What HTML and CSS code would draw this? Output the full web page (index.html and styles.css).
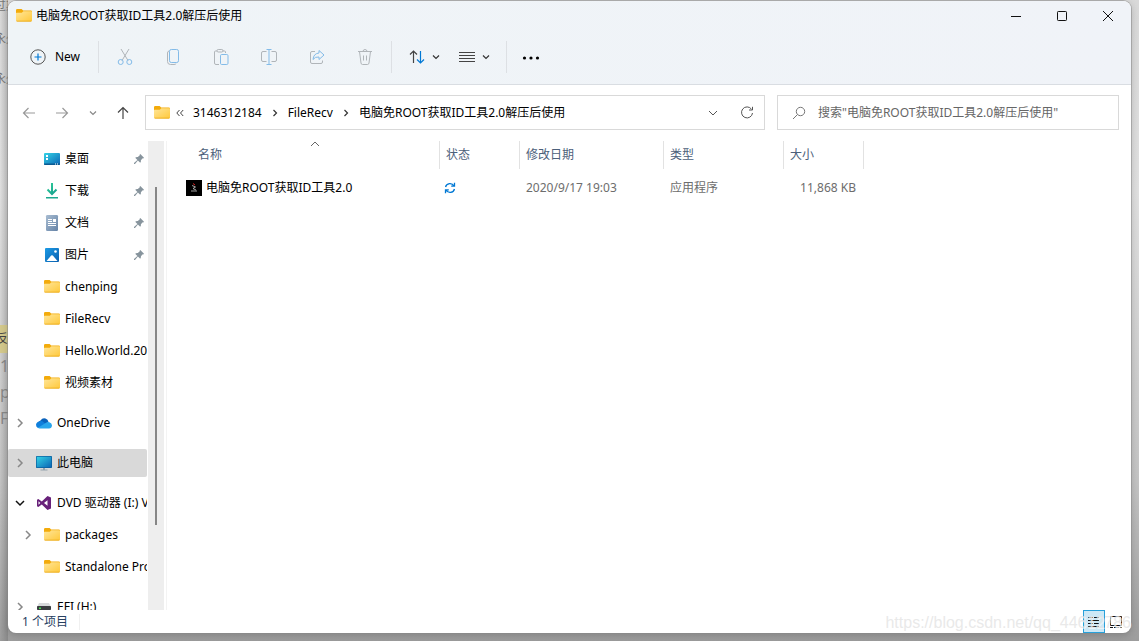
FILE: index.html
```html
<!DOCTYPE html>
<html lang="zh-CN">
<head>
<meta charset="utf-8">
<meta name="viewport" content="width=device-width, initial-scale=1">
<title>电脑免ROOT获取ID工具2.0解压后使用</title>
<link rel="stylesheet" href="styles.css">
</head>
<body>
<svg class="defs" aria-hidden="true">
  <defs>
    <linearGradient id="gFolder" x1="0" y1="0" x2="1" y2="1"><stop offset="0" stop-color="#ffe69a"/><stop offset="1" stop-color="#ffc83a"/></linearGradient>
    <linearGradient id="gScreen" x1="0" y1="0" x2="1" y2="1"><stop offset="0" stop-color="#34d3e6"/><stop offset="1" stop-color="#0b65b5"/></linearGradient>
    <linearGradient id="gDoc" x1="0" y1="0" x2="1" y2="1"><stop offset="0" stop-color="#a9bdd2"/><stop offset="1" stop-color="#6482a6"/></linearGradient>
    <linearGradient id="gPic" x1="0" y1="0" x2="1" y2="1"><stop offset="0" stop-color="#1c9be6"/><stop offset="1" stop-color="#0a5fae"/></linearGradient>
    <linearGradient id="gDown" gradientUnits="userSpaceOnUse" x1="3" y1="1" x2="13" y2="12"><stop offset="0" stop-color="#2fcf9a"/><stop offset="1" stop-color="#12988c"/></linearGradient>
  </defs>
  <symbol id="folder" viewBox="0 1 16 16"><path d="M0 3.2Q0 2 1.2 2H5.6L7.2 3.6H14.8Q16 3.6 16 4.800V8H0Z" fill="#f3ab0b"/><path d="M0 6.200Q0 5.800 .6 5.800H5.800L7.400 4.300H15.200Q16 4.300 16 5V13.200Q16 14.500 14.800 14.500H1.200Q0 14.500 0 13.200Z" fill="url(#gFolder)"/><path d="M.2 13.700Q.5 14.500 1.200 14.500H14.800Q15.500 14.500 15.800 13.700Z" fill="#e8a30e"/></symbol>
  <symbol id="desktop" viewBox="0 0 16 16"><rect y="2" width="16" height="12" rx="1" fill="url(#gScreen)"/><path d="M0 12.500H16V13Q16 14 15 14H1Q0 14 0 13Z" fill="#0a5a92"/><path d="M2 4h2v2H2zM2 7h2v2H2zM11 12.500h1v1h-1zM13 12.500h1v1h-1z" fill="#fff"/></symbol>
  <symbol id="download" viewBox="0 0 16 16" fill="none" stroke="url(#gDown)" stroke-width="2"><path d="M8 0V11M3.500 6.500 8 11 12.500 6.500"/><path d="M2 14H14V15.500H2Z" fill="#1ba98f" stroke="none"/></symbol>
  <symbol id="document" viewBox="0 0 16 16"><rect x="2" width="12" height="16" rx="1.200" fill="url(#gDoc)"/><path d="M4 4.500h4M4 6.500h4M4 8.500h8M4 10.500h8" stroke="#fff"/><path d="M9 4h3v3H9z" fill="#fff"/></symbol>
  <symbol id="picture" viewBox="0 0 16 16"><rect x="1" y="1" width="14" height="14" rx="1" fill="url(#gPic)"/><path d="M2.500 14 7.200 8.500Q8 7.800 8.800 8.500L13.500 14Z" fill="#fff"/><circle cx="11.500" cy="4.500" r="1.300" fill="#fff"/></symbol>
  <symbol id="cloud" viewBox="0 0 16 16"><path d="M4.500 5.500Q6.500 2.500 9.500 3.500Q12 4.400 12.500 7L8 10 2 8Q2.800 6 4.500 5.500Z" fill="#0a62bb"/><path d="M3.600 6.200Q6 5.500 8 7.400L13 11.500 2 13Q0 12 0 9.800Q.4 6.800 3.600 6.200Z" fill="#0f7fdc"/><path d="M2 12.800 10 7.800Q11.500 6.600 13.300 7.200Q16 8 16 10.500Q15.700 13.500 13 13.500H3.500Q2.500 13.500 2 12.800Z" fill="#28a5ec"/></symbol>
  <symbol id="monitor" viewBox="0 0 16 16"><path d="M7 13h2v1.500h2.500v1h-7v-1H7z" fill="#96a3ad"/><rect y="1" width="16" height="12" rx=".8" fill="#0a5c9c"/><rect x=".7" y="1.700" width="14.600" height="10.600" fill="url(#gScreen)"/></symbol>
  <symbol id="vs" viewBox="0 0 16 16"><path d="M11.500 1 15 2.500V13.500L11.500 15 5.800 9.600 2.300 12 1 11.300V4.700L2.300 4 5.800 6.400ZM11.500 5.200 8 8 11.500 10.800ZM2.500 6.200V9.800L4.300 8Z" fill="#68217a" fill-rule="evenodd"/></symbol>
  <symbol id="drive" viewBox="0 0 16 16"><path d="M3 4H13L15 8H1Z" fill="#d7d9db"/><rect x="1" y="7" width="14" height="4" rx=".8" fill="#3a3d40"/><path d="M3 8.500h2V10H3z" fill="#43e04c"/></symbol>
  <symbol id="pin" viewBox="0 0 12 12"><path d="M7.300 1 11 4.700 10.300 5.400 9.700 5.200 7.900 7.200Q8.200 8.700 7.200 9.800L4.900 7.600 2 11 1 11 1 10.100 4.400 7.100 2.200 4.800Q3.300 3.800 4.800 4.100L6.800 2.300 6.600 1.700Z" fill="#87949d"/></symbol>
  <symbol id="right" viewBox="0 0 12 12"><path d="M4 2 8 6 4 10" fill="none" stroke="currentColor" stroke-width="1.500"/></symbol>
  <symbol id="down" viewBox="0 0 12 12"><path d="M2 4 6 8 10 4" fill="none" stroke="currentColor" stroke-width="1.500"/></symbol>
  <symbol id="smalldown" viewBox="0 0 8 8"><path d="M1 2.500 4 5.500 7 2.500" fill="none" stroke="currentColor" stroke-width="1.200"/></symbol>
  <symbol id="smallright" viewBox="0 0 8 8"><path d="M2.500 1 5.500 4 2.500 7" fill="none" stroke="currentColor" stroke-width="1.200"/></symbol>
</svg>

<div class="backdrop" aria-hidden="true">
  <span class="scrap scrap-a">过期</span>
  <span class="scrap scrap-b">永久</span>
  <span class="scrap scrap-c">永久</span>
  <span class="scrap scrap-d">反</span>
  <span class="scrap scrap-e">1</span>
  <span class="scrap scrap-f">p</span>
  <span class="scrap scrap-g">F</span>
</div>

<main class="window">
  <header class="titlebar">
    <svg class="icon"><use href="#folder"/></svg>
    <h1 class="title">电脑免ROOT获取ID工具2.0解压后使用</h1>
    <div class="captions">
      <button class="caption" aria-label="最小化"><svg viewBox="0 0 12 12"><path d="M1 6.500h10"/></svg></button>
      <button class="caption" aria-label="最大化"><svg viewBox="0 0 12 12"><rect x="1.500" y="1.500" width="9" height="9" rx=".8"/></svg></button>
      <button class="caption" aria-label="关闭"><svg viewBox="0 0 12 12"><path d="M1 1 11 11M11 1 1 11"/></svg></button>
    </div>
  </header>

  <div class="commands" role="toolbar" aria-label="命令">
    <button class="new"><svg class="icon" viewBox="0 0 16 16" fill="none"><circle cx="8" cy="8" r="7.200" stroke="#555"/><path d="M8 4.500v7M4.500 8h7" stroke="#0078d4" stroke-width="1.200"/></svg><span>New</span></button>
    <span class="rule"></span>
    <div class="tools">
      <button class="tool" aria-label="剪切"><svg viewBox="0 0 16 18" fill="none"><path d="M4 1 11 12.500M12 1 5 12.500" stroke="#b0b5b9"/><circle cx="3.700" cy="14" r="2.500" stroke="#83bbe8"/><circle cx="12.300" cy="14" r="2.500" stroke="#83bbe8"/></svg></button>
      <button class="tool" aria-label="复制"><svg viewBox="0 0 16 18" fill="none"><path d="M4 3Q2.500 3.300 2.500 5V13.500Q2.500 16.500 5.500 16.500H9Q10.700 16.500 11.200 15.500" stroke="#b0b5b9"/><rect x="4.500" y="1.500" width="9" height="13" rx="1.800" stroke="#83bbe8"/></svg></button>
      <button class="tool" aria-label="粘贴"><svg viewBox="0 0 16 18" fill="none"><path d="M4 3H2.500Q1.500 3 1.500 4V15Q1.500 16.500 3 16.500H6M9.500 3H11.500Q12.500 3 12.500 4V5" stroke="#b0b5b9"/><rect x="4" y="1.500" width="6" height="2.500" rx="1.200" stroke="#b0b5b9"/><rect x="7.500" y="6.500" width="7.500" height="10" rx="1.200" stroke="#83bbe8"/></svg></button>
      <button class="tool" aria-label="重命名"><svg viewBox="0 0 18 18" fill="none"><path d="M6.500 3.500H3Q1.500 3.500 1.500 5V12Q1.500 13.500 3 13.500H6.500M11.500 3.500H15Q16.500 3.500 16.500 5V12Q16.500 13.500 15 13.500H11.500" stroke="#b0b5b9"/><path d="M9 1.500V16.500M6.500 1.500h5M6.500 16.500h5" stroke="#83bbe8"/></svg></button>
      <button class="tool" aria-label="共享"><svg viewBox="0 0 16 18" fill="none"><path d="M6 3.500H3Q1.500 3.500 1.500 5V14Q1.500 15.500 3 15.500H12Q13.500 15.500 13.500 14V12.500" stroke="#b0b5b9"/><path d="M10 2.500 15 7 10 11.500V9Q6 8.500 4 11.500Q4.500 5.500 10 5Z" stroke="#83bbe8" stroke-linejoin="round"/></svg></button>
      <button class="tool" aria-label="删除"><svg viewBox="0 0 16 18" fill="none" stroke="#b0b5b9"><path d="M1 3.500h14M6 3.500Q6 1.500 8 1.500T10 3.500M2.500 3.500 4 15Q4.200 16.500 5.500 16.500H10.500Q11.800 16.500 12 15L13.500 3.500M6.500 7.500v5M9.500 7.500v5"/></svg></button>
    </div>
    <span class="rule"></span>
    <div class="menus">
      <button class="menu" aria-label="排序"><svg class="glyph" viewBox="0 0 18 18" fill="none"><path d="M5.500 15V3M2 6.500 5.500 3 9 6.500" stroke="#444" stroke-width="1.200"/><path d="M12.500 3V15M9 11.500 12.500 15 16 11.500" stroke="#0078d4" stroke-width="1.200"/></svg><svg class="tiny"><use href="#smalldown"/></svg></button>
      <button class="menu" aria-label="查看"><svg class="glyph" viewBox="0 0 18 18"><path d="M1 4.500h16M1 7.500h16M1 10.500h16M1 13.500h16" stroke="#444"/></svg><svg class="tiny"><use href="#smalldown"/></svg></button>
    </div>
    <span class="rule"></span>
    <button class="more" aria-label="更多"><svg class="glyph" viewBox="0 0 18 18"><circle cx="2.500" cy="10" r="1.600"/><circle cx="9" cy="10" r="1.600"/><circle cx="15.500" cy="10" r="1.600"/></svg></button>
  </div>

  <div class="location">
    <nav class="history" aria-label="导航">
      <button class="hist faint" aria-label="后退"><svg viewBox="0 0 14 14"><path d="M13 7H1.500M6.500 2 1.500 7 6.500 12"/></svg></button>
      <button class="hist faint" aria-label="前进"><svg viewBox="0 0 14 14"><path d="M1 7H12.500M7.500 2 12.500 7 7.500 12"/></svg></button>
      <button class="hist recent" aria-label="最近"><svg><use href="#smalldown"/></svg></button>
      <button class="hist" aria-label="向上"><svg viewBox="0 0 14 14"><path d="M7 13V1.500M2 6.500 7 1.500 12 6.500"/></svg></button>
    </nav>
    <div class="address">
      <svg class="icon"><use href="#folder"/></svg>
      <svg class="chev-left" viewBox="0 0 8 8"><path d="M3.500 1 .8 4 3.500 7M7.200 1 4.500 4 7.200 7"/></svg>
      <a class="crumb" href="#a">3146312184</a>
      <svg class="tiny"><use href="#smallright"/></svg>
      <a class="crumb" href="#b">FileRecv</a>
      <svg class="tiny"><use href="#smallright"/></svg>
      <a class="crumb" href="#c">电脑免ROOT获取ID工具2.0解压后使用</a>
      <div class="address-end">
        <button class="plain" aria-label="历史记录"><svg class="drop" viewBox="0 0 10 10"><path d="M1 3 5 7 9 3"/></svg></button>
        <button class="plain" aria-label="刷新"><svg class="refresh" viewBox="0 0 14 14"><path d="M11.500 3.200A5.500 5.500 0 1 0 12.500 7M12.500 .8V4H9"/></svg></button>
      </div>
    </div>
    <label class="search">
      <svg viewBox="0 0 14 14"><circle cx="8.500" cy="5.500" r="4.200"/><path d="M5.500 8.500 1 13"/></svg>
      <input type="text" aria-label="搜索" placeholder="搜索&quot;电脑免ROOT获取ID工具2.0解压后使用&quot;">
    </label>
  </div>

  <div class="content">
    <nav class="tree" aria-label="文件夹">
      <div class="group">
        <a class="node child" href="#1"><span class="twist"></span><svg class="icon"><use href="#desktop"/></svg><span class="label">桌面</span><svg class="pin"><use href="#pin"/></svg></a>
        <a class="node child" href="#2"><span class="twist"></span><svg class="icon"><use href="#download"/></svg><span class="label">下载</span><svg class="pin"><use href="#pin"/></svg></a>
        <a class="node child" href="#3"><span class="twist"></span><svg class="icon"><use href="#document"/></svg><span class="label">文档</span><svg class="pin"><use href="#pin"/></svg></a>
        <a class="node child" href="#4"><span class="twist"></span><svg class="icon"><use href="#picture"/></svg><span class="label">图片</span><svg class="pin"><use href="#pin"/></svg></a>
        <a class="node child" href="#5"><span class="twist"></span><svg class="icon"><use href="#folder"/></svg><span class="label">chenping</span></a>
        <a class="node child" href="#6"><span class="twist"></span><svg class="icon"><use href="#folder"/></svg><span class="label">FileRecv</span></a>
        <a class="node child" href="#7"><span class="twist"></span><svg class="icon"><use href="#folder"/></svg><span class="label">Hello.World.2020</span></a>
        <a class="node child" href="#8"><span class="twist"></span><svg class="icon"><use href="#folder"/></svg><span class="label">视频素材</span></a>
      </div>
      <div class="group">
        <a class="node" href="#9"><svg class="twist"><use href="#right"/></svg><svg class="icon"><use href="#cloud"/></svg><span class="label">OneDrive</span></a>
      </div>
      <div class="group">
        <a class="node selected" href="#10"><svg class="twist"><use href="#right"/></svg><svg class="icon"><use href="#monitor"/></svg><span class="label">此电脑</span></a>
      </div>
      <div class="group">
        <a class="node open" href="#11"><svg class="twist"><use href="#down"/></svg><svg class="icon"><use href="#vs"/></svg><span class="label">DVD 驱动器 (I:) VS</span></a>
        <a class="node child" href="#12"><svg class="twist"><use href="#right"/></svg><svg class="icon"><use href="#folder"/></svg><span class="label">packages</span></a>
        <a class="node child" href="#13"><span class="twist"></span><svg class="icon"><use href="#folder"/></svg><span class="label">Standalone Profiler</span></a>
      </div>
      <div class="group">
        <a class="node" href="#14"><svg class="twist"><use href="#right"/></svg><svg class="icon"><use href="#drive"/></svg><span class="label">EFI (H:)</span></a>
      </div>
    </nav>
    <div class="scrollbar"><div class="thumb"></div></div>
    <section class="files">
      <table class="list">
        <thead>
          <tr>
            <th class="c-name">名称<svg class="sort" viewBox="0 0 10 6"><path d="M1 5 5 1 9 5"/></svg></th>
            <th class="c-state">状态</th>
            <th class="c-date">修改日期</th>
            <th class="c-type">类型</th>
            <th class="c-size">大小</th>
          </tr>
        </thead>
        <tbody>
          <tr>
            <td><span class="file"><svg class="icon" viewBox="0 0 16 16"><path d="M0 0h16v16H0z"/><path d="M6 5.500 9.500 7 7 8.500 10 10M5 11h6" fill="none" stroke="#ccc" stroke-width=".8"/><path d="M7 3.500 9 5" stroke="#d22"/></svg>电脑免ROOT获取ID工具2.0</span></td>
            <td class="state"><svg class="sync" viewBox="0 0 12 12"><path d="M1.500 5A4.600 4.600 0 0 1 10 4M10.500 .8V4.200H7.200M10.500 7A4.600 4.600 0 0 1 2 8M1.500 11.200V7.800H4.800"/></svg></td>
            <td>2020/9/17 19:03</td>
            <td>应用程序</td>
            <td class="size">11,868 KB</td>
          </tr>
        </tbody>
      </table>
    </section>
  </div>

  <footer class="status">
    <span class="count">1 个项目</span>
    <div class="views">
      <button class="view active" aria-label="详细信息"><svg viewBox="0 0 12 12"><path d="M0 1.500h5M6 1.500h5M0 4.500h11M0 7.500h5M6 7.500h5M0 10.500h11"/></svg></button>
      <button class="view" aria-label="大图标"><svg viewBox="0 0 12 12"><path d="M.5 .5h11v9h-11zM0 11.500h3M4 11.500h5M10 11.500h2"/></svg></button>
    </div>
  </footer>
</main>
<div class="watermark">https://blog.csdn.net/qq_44612786</div>
</body>
</html>
```

FILE: styles.css
```css
* { box-sizing: border-box; }

body {
  margin: 0;
  height: 100vh;
  padding: 1px 8px 8px;
  overflow: hidden;
  position: relative;
  background: linear-gradient(#d9d9d9, #e0e0e0 30%, #c4c4c4 75%, #9d9d9d);
  color: #000;
  font: 12px/16px "Noto Sans", "Noto Sans CJK SC", sans-serif;
}

button {
  display: flex;
  align-items: center;
  justify-content: center;
  margin: 0;
  padding: 0;
  border: 0;
  background: none;
  color: inherit;
  font: inherit;
}

a { color: inherit; text-decoration: none; }
svg { display: block; flex: none; }
.defs { position: absolute; width: 0; height: 0; }
.icon { width: 16px; height: 16px; }
.tiny { width: 8px; height: 8px; color: #333; }

/* Desktop behind the window */
.backdrop {
  position: absolute;
  inset: 0 auto 0 0;
  width: 8px;
  overflow: hidden;
  background: linear-gradient(to right, transparent, #0002);
  color: #777;
}
.scrap { position: absolute; left: -6px; white-space: nowrap; }
.scrap-a { top: -2px; }
.scrap-b { top: 31px; }
.scrap-c { top: 71px; }
.scrap-d { top: 325px; left: 0; width: 8px; padding: 6px 0; background: #d4c98c; color: #444; text-indent: -4px; }
.scrap-e { top: 358px; left: 0; color: #888; font-size: 16px; }
.scrap-f { top: 384px; left: 0; color: #888; font-size: 16px; }
.scrap-g { top: 410px; left: 0; color: #888; font-size: 16px; }

.window {
  position: relative;
  display: flex;
  flex-direction: column;
  height: 100%;
  overflow: hidden;
  border-radius: 8px;
  background: #fff;
  box-shadow: 0 0 0 1px #8888, 0 2px 8px #0003;
}

.titlebar {
  display: flex;
  flex: none;
  align-items: center;
  height: 29px;
  padding-left: 8px;
  gap: 4px;
  background: linear-gradient(to right, #eff4f7, #f0f3f8);
}
.title { margin: 0; font-size: 12px; font-weight: 400; }
.captions { display: flex; margin-left: auto; }
.caption { width: 46px; height: 28px; }
.caption svg { width: 12px; height: 12px; fill: none; stroke: #111; }

.commands {
  display: flex;
  flex: none;
  align-items: center;
  height: 55px;
  border-bottom: 1px solid #d9dde2;
  background: linear-gradient(to right, #eff4f7, #f0f3f8);
}
.new { gap: 9px; width: 90px; padding-left: 4px; }
.rule { width: 1px; height: 32px; background: #dde0e4; }
.tools { display: flex; gap: 16px; padding: 0 10px; }
.tool { width: 32px; height: 32px; }
.tool svg { width: 18px; height: 18px; }
.menus { display: flex; gap: 18px; padding: 0 16px; }
.menu { gap: 6px; }
.glyph { width: 18px; height: 18px; }
.more { padding: 0 15px; }

.location { display: flex; flex: none; gap: 12px; padding: 10px 12px 10px 10px; }
.history { display: flex; flex: none; align-items: center; justify-content: space-between; width: 115px; padding: 0 3px 0 4px; }
.hist svg { width: 14px; height: 14px; fill: none; stroke: #444; stroke-width: 1.2; }
.hist.faint svg { stroke: #999; }
.hist.recent svg { width: 8px; height: 8px; color: #888; stroke: none; }
.address {
  display: flex;
  flex: 1 1 620px;
  align-items: center;
  height: 35px;
  padding: 0 8px;
  border: 1px solid #d9d9d9;
}
.chev-left { width: 8px; height: 8px; margin-left: 6px; fill: none; stroke: #444; }
.crumb { margin: 0 9px; white-space: nowrap; }
.address-end { display: flex; gap: 22px; margin-left: auto; padding-right: 2px; }
.drop { width: 10px; height: 10px; fill: none; stroke: #555; }
.refresh { width: 14px; height: 14px; fill: none; stroke: #555; }
.search {
  display: flex;
  flex: 0 1 342px;
  align-items: center;
  gap: 12px;
  height: 35px;
  padding: 0 14px;
  border: 1px solid #d9d9d9;
}
.search svg { width: 14px; height: 14px; fill: none; stroke: #777; }
.search input { flex: 1; min-width: 0; padding: 0; border: 0; outline: 0; background: none; font: inherit; }
.search input::placeholder { color: #666; opacity: 1; }

.content { display: flex; flex: 1; min-height: 0; padding-top: 1px; }
.tree { flex: none; width: 140px; padding: 2px 1px 0 0; overflow: hidden; }
.group { display: flow-root; margin-bottom: 8px; }
.node { display: flex; align-items: center; height: 28px; margin: 2px 0; padding-left: 6px; }
.group .node + .node { margin-top: 4px; }
.child { padding-left: 14px; }
.selected { border-radius: 2px; background: #d9d9d9; }
.twist { flex: none; width: 12px; height: 12px; margin-right: 10px; color: #888; }
.open .twist { color: #111; }
.label { flex: 1; min-width: 0; margin-left: 5px; overflow: hidden; white-space: nowrap; }
.pin { width: 12px; height: 12px; margin-right: 2px; }
.scrollbar { flex: none; width: 16px; background: #eee; }
.thumb { width: 2px; height: 72%; margin: 46px auto 0; background: #868686; }

.files { flex: 1; min-width: 0; margin-left: 2px; border-left: 1px solid #f3f3f3; }
.list { table-layout: fixed; width: 697px; border-collapse: separate; border-spacing: 0; color: #6d6d6d; }
.list th { height: 28px; padding: 0 0 0 6px; border-right: 1px solid #e2e2e2; color: #4c607a; font-weight: 400; text-align: left; }
.list td { height: 38px; padding: 0 0 0 6px; }
.list .c-name { position: relative; width: 273px; padding-left: 31px; }
.c-state { width: 80px; }
.c-date { width: 144px; }
.c-type { width: 120px; }
.sort { position: absolute; top: 0; right: 119px; width: 10px; height: 6px; fill: none; stroke: #666; }
.list td:first-child { padding-left: 19px; }
.file { display: flex; align-items: center; gap: 4px; color: #000; }
.sync { width: 12px; height: 12px; fill: none; stroke: #0078d4; stroke-width: 1.3; }
.list td.state { padding-left: 4px; }
.list td.size { padding-right: 8px; text-align: right; }

.status { display: flex; flex: none; align-items: center; height: 23px; padding: 0 4px 0 14px; color: #27405f; }
.count { padding-right: 11px; border-right: 1px solid #f0f0f0; }
.views { display: flex; margin-left: auto; }
.view { width: 22px; height: 23px; }
.view svg { width: 12px; height: 12px; fill: none; stroke: #111; }
.view.active { border: 1px solid #26a0da; background: #cce8f6; }

.watermark {
  position: absolute;
  right: 8px;
  bottom: 8px;
  color: #e3e3e3cc;
  font: 16px/20px "Liberation Sans", Arial, sans-serif;
  text-shadow: 1px 1px 0 #fff8;
  pointer-events: none;
}
```
